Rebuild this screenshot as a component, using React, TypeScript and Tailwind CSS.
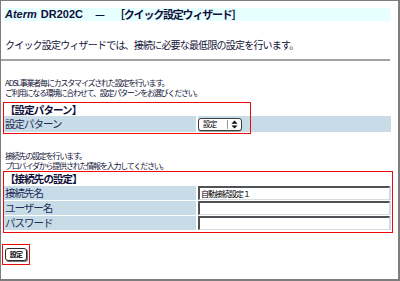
import React from 'react';

const jp = '[font-family:"Noto_Sans_CJK_JP",sans-serif]';

const Row: React.FC<{ label: string; children?: React.ReactNode; tall?: boolean }> = ({ label, children, tall }) => (
  <div className={`grid grid-cols-[192px_193px] gap-x-[2px] ${tall ? 'h-[16px]' : 'h-[14px]'}`}>
    <div className="bg-[#c8dce7] pl-[1px] flex items-center text-[10.5px] tracking-[-1px] text-[#1d2b57] leading-[12px]">
      {label}
    </div>
    <div className="bg-[#c8dce7] flex items-center">{children}</div>
  </div>
);

const TextField: React.FC<{ value?: string }> = ({ value }) => (
  <div className="w-[192px] h-full bg-white border-t-2 border-l-2 border-[#4f5357] border-r border-b border-r-[#d6dde2] border-b-[#d6dde2] flex items-center pl-[1px] text-[8px] tracking-[-1px] text-black leading-none">
    {value}
  </div>
);

const App: React.FC = () => {
  return (
    <div
      className={`w-[400px] h-[281px] bg-white border-l border-t border-r-2 border-b-2 border-[#7d7d7d] overflow-hidden ${jp} text-[#141438]`}
    >
      {/* Title band */}
      <div className="mt-[7px] ml-[2px] w-[388px] h-[13px] bg-[#e6ffff] flex items-center pl-[2px] font-bold text-[11px] leading-none text-[#0f0f3c] whitespace-nowrap">
        <span className="italic [font-family:'Liberation_Sans',sans-serif]">Aterm</span>
        <span className="ml-[4px] [font-family:'Liberation_Sans',sans-serif]">DR202C</span>
        <span className="ml-[12px]">—</span>
        <span className="ml-[9px] tracking-[-1.2px]">［クイック設定ウィザード］</span>
      </div>

      <p className="mt-[18px] ml-[4px] h-[12px] text-[10px] leading-[12px] tracking-[-0.8px] whitespace-nowrap">
        クイック設定ウィザードでは、接続に必要な最低限の設定を行います。
      </p>

      <div className="mt-[8px] w-[389px] h-[2px] bg-[#a3a3a3]" />

      <div className="mt-[17px] ml-[4px] text-[8px] leading-[10px] tracking-[-1.2px] whitespace-nowrap">
        <p>ADSL事業者毎にカスタマイズされた設定を行います。</p>
        <p>ご利用になる環境に合わせて、設定パターンをお選びください。</p>
      </div>

      {/* Pattern section */}
      <div className="relative mt-[4px] ml-[2px] w-[390px] border border-transparent pb-[1px]">
        <div className="h-[13px] pl-[1px] font-bold text-[10.5px] tracking-[-0.9px] leading-[13px] text-[#10103a] whitespace-nowrap">
          【設定パターン】
        </div>
        <Row label="設定パターン" tall>
          <div className="w-[44px] h-[13px] rounded-[3px] border border-[#3c3c3c] bg-white shadow-[0_1px_0_#9aa] flex items-center">
            <span className="w-[28px] pl-[4px] text-[7.5px] tracking-[-0.8px] leading-none text-black">設定</span>
            <span className="w-px h-[9px] bg-[#9a9a9a]" />
            <svg viewBox="0 0 8 10" className="w-[7px] h-[9px] ml-[3px]">
              <path d="M4 0.5 L7.5 4 H0.5 Z" fill="#111" />
              <path d="M4 9.5 L7.5 6 H0.5 Z" fill="#111" />
            </svg>
          </div>
        </Row>
        <div className="absolute -left-px -top-px w-[248px] h-[32px] border border-[#ee0a0a] pointer-events-none" />
      </div>

      <div className="mt-[17px] ml-[4px] text-[8px] leading-[10px] tracking-[-1.2px] whitespace-nowrap">
        <p>接続先の設定を行います。</p>
        <p>プロバイダから提供された情報を入力してください。</p>
      </div>

      {/* Connection section */}
      <div className="ml-[2px] w-[390px] border border-[#ee0a0a] pb-[2px]">
        <div className="h-[14px] pl-[1px] font-bold text-[10.5px] tracking-[-0.9px] leading-[14px] text-[#10103a] whitespace-nowrap">
          【接続先の設定】
        </div>
        <div className="flex flex-col gap-y-[1px]">
          <Row label="接続先名">
            <TextField value="自動接続設定１" />
          </Row>
          <Row label="ユーザー名">
            <TextField />
          </Row>
          <Row label="パスワード">
            <TextField />
          </Row>
        </div>
      </div>

      {/* Submit */}
      <div className="mt-[11px] ml-[1px] w-[28px] h-[21px] border border-[#ee0a0a] flex items-center justify-center">
        <button className="w-[22px] h-[13px] rounded-[3px] border border-[#2a2a2a] bg-white shadow-[1px_1px_0_#777] flex items-center justify-center text-[7px] font-bold tracking-[-0.8px] leading-none text-black">
          設定
        </button>
      </div>
    </div>
  );
};

export default App;
